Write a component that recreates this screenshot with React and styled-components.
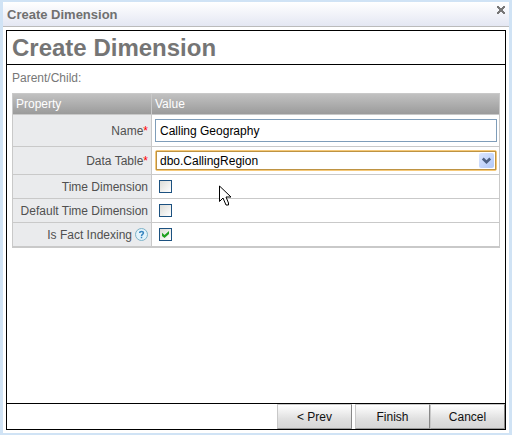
import React from "react";
import styled, { createGlobalStyle } from "styled-components";

const GlobalStyle = createGlobalStyle`
  *, *::before, *::after { box-sizing: border-box; }
  body {
    margin: 0;
    font-family: "Liberation Sans", Arial, sans-serif;
    font-size: 12px;
    color: #555;
  }
`;

const Dialog = styled.div`
  position: relative;
  display: flex;
  flex-direction: column;
  min-height: 100vh;
  border: solid #d0e3f5;
  border-width: 2px 3px;
  background: #fff;
`;

const TitleBar = styled.header`
  display: flex;
  justify-content: space-between;
  align-items: flex-start;
  height: 25px;
  padding-left: 4px;
  border-bottom: 1px solid #bbb;
  background: linear-gradient(#fff, #e4e7f3);
`;

const DialogTitle = styled.span`
  font-size: 13px;
  font-weight: bold;
  line-height: 25px;
  color: #707070;
`;

const CloseButton = styled.button`
  display: flex;
  margin: 0;
  padding: 4px;
  border: 0;
  background: none;
`;

const Panel = styled.main`
  flex: 1;
  display: flex;
  flex-direction: column;
  margin: 3px;
  border: 1px solid #000;
`;

const Heading = styled.h1`
  margin: 0;
  padding-left: 5px;
  border-bottom: 1px solid #000;
  font-size: 24px;
  line-height: 33px;
  color: #757575;
`;

const Content = styled.section`
  flex: 1;
  padding: 5px;
`;

const Subtitle = styled.p`
  margin: 0;
  padding-bottom: 7px;
  line-height: 16px;
  color: #777;
`;

const Properties = styled.table`
  width: 100%;
  border-collapse: separate;
  border-spacing: 0;
  border: 1px solid #c9c9c9;
`;

const HeaderRow = styled.tr`
  height: 21px;
  background: linear-gradient(#c1c1c1, #999);
`;

const HeaderCell = styled.th`
  padding: 0 3px;
  border-bottom: 1px solid #c9c9c9;
  font-weight: normal;
  text-align: left;
  color: #fff;
  &:first-child {
    width: 139px;
    border-right: 1px solid #c9c9c9;
  }
`;

const Row = styled.tr`
  height: ${(p) => p.$height}px;
`;

const LabelCell = styled.th`
  padding: 0 3px;
  border-right: 1px solid #c9c9c9;
  border-bottom: 1px solid #c9c9c9;
  background: #eaebed;
  font-weight: normal;
  text-align: right;
  white-space: nowrap;
  color: #505050;
`;

const LabelLine = styled.span`
  display: flex;
  justify-content: flex-end;
  align-items: center;
  gap: 3px;
`;

const Required = styled.span`
  color: #f00;
`;

const ValueCell = styled.td`
  padding: 0 2px 0 3px;
  border-bottom: 1px solid #c9c9c9;
`;

const TextInput = styled.input`
  display: block;
  width: 100%;
  height: 23px;
  margin: 0;
  padding: 0 4px;
  border: 1px solid #7f9db9;
  background: #fff;
  font: inherit;
  color: #000;
`;

const SelectWrap = styled.div`
  display: grid;
  align-items: center;
  height: 21px;
  border: 1px solid #f5c979;
  border-radius: 2px;
  & > * { grid-area: 1 / 1; }
`;

const Select = styled.select`
  appearance: none;
  width: 100%;
  height: 19px;
  margin: 0;
  padding: 0 20px 0 3px;
  border: 1px solid #be9343;
  outline: none;
  background: #fff;
  font: inherit;
  color: #000;
`;

const ArrowBox = styled.span`
  justify-self: end;
  display: flex;
  margin-right: 2px;
  border-radius: 2px;
  background: linear-gradient(135deg, #dce6ff, #b0c8f8);
  pointer-events: none;
`;

const CheckBox = styled.input`
  appearance: none;
  display: grid;
  place-content: center;
  width: 13px;
  height: 13px;
  margin: 0 4px;
  border: 1px solid #1c5180;
  background: linear-gradient(135deg, #dcdcd7, #fff);
  &:checked::after {
    content: "";
    width: 7px;
    height: 7px;
    background: #21a121;
    clip-path: polygon(0 26%, 36% 58%, 100% 0, 100% 43%, 36% 100%, 0 70%);
  }
`;

const Footer = styled.footer`
  display: flex;
  justify-content: flex-end;
  border-top: 1px solid #000;
`;

const ButtonGroup = styled.div`
  display: flex;
  margin-left: 3px;
`;

const Button = styled.button`
  width: 75px;
  height: 25px;
  padding: 0;
  border: 1px solid #999;
  border-color: #c8c8c8 #888 #999 #c8c8c8;
  background: linear-gradient(#fff, #e0e0e0 60%, #d6d6d6);
  font: inherit;
  color: #111;
`;

const Pointer = styled.svg`
  position: absolute;
  left: 216px;
  top: 183px;
  pointer-events: none;
`;

function CloseIcon() {
  return (
    <svg width="8" height="8" viewBox="0 0 8 8" shapeRendering="crispEdges" aria-hidden="true">
      <path fill="#777" d="M0 0h2v1h1v1h2V1h1V0h2v2H7v1H6v2h1v1h1v2H6V7H5V6H3v1H2v1H0V6h1V5h1V3H1V2H0z" />
    </svg>
  );
}

function ArrowIcon() {
  return (
    <svg width="15" height="15" viewBox="0 0 15 15" aria-hidden="true">
      <path fill="none" stroke="#4d6185" strokeWidth="2.6" d="m3.8 5.5 3.7 3.7 3.7-3.7" />
    </svg>
  );
}

function HelpIcon() {
  return (
    <svg width="13" height="13" viewBox="0 0 13 13" role="img" aria-label="Help">
      <circle cx="6.5" cy="6.5" r="6" fill="#e3f3fb" stroke="#7db2c8" />
      <path fill="none" stroke="#3a86c0" strokeWidth="1.5" d="M4.7 5.1c0-2.2 3.7-2.2 3.7 0 0 1.3-1.9 1.2-1.9 2.8M6.5 8.8v1.4" />
    </svg>
  );
}

function CheckRow({ id, label, checked, help }) {
  return (
    <Row $height={24}>
      <LabelCell scope="row">
        <LabelLine>
          <label htmlFor={id}>{label}</label>
          {help && <HelpIcon />}
        </LabelLine>
      </LabelCell>
      <ValueCell>
        <CheckBox id={id} type="checkbox" defaultChecked={checked} />
      </ValueCell>
    </Row>
  );
}

export default function App() {
  return (
    <>
      <GlobalStyle />
      <Dialog role="dialog" aria-label="Create Dimension">
        <TitleBar>
          <DialogTitle>Create Dimension</DialogTitle>
          <CloseButton type="button" aria-label="Close"><CloseIcon /></CloseButton>
        </TitleBar>
        <Panel>
          <Heading>Create Dimension</Heading>
          <Content>
            <Subtitle>Parent/Child:</Subtitle>
            <Properties>
              <thead>
                <HeaderRow>
                  <HeaderCell scope="col">Property</HeaderCell>
                  <HeaderCell scope="col">Value</HeaderCell>
                </HeaderRow>
              </thead>
              <tbody>
                <Row $height={32}>
                  <LabelCell scope="row">
                    <label htmlFor="name">Name<Required>*</Required></label>
                  </LabelCell>
                  <ValueCell><TextInput id="name" type="text" defaultValue="Calling Geography" /></ValueCell>
                </Row>
                <Row $height={28}>
                  <LabelCell scope="row">
                    <label htmlFor="data-table">Data Table<Required>*</Required></label>
                  </LabelCell>
                  <ValueCell>
                    <SelectWrap>
                      <Select id="data-table"><option>dbo.CallingRegion</option></Select>
                      <ArrowBox><ArrowIcon /></ArrowBox>
                    </SelectWrap>
                  </ValueCell>
                </Row>
                <CheckRow id="time" label="Time Dimension" />
                <CheckRow id="default-time" label="Default Time Dimension" />
                <CheckRow id="fact-indexing" label="Is Fact Indexing" checked help />
              </tbody>
            </Properties>
          </Content>
          <Footer>
            <Button type="button">&lt; Prev</Button>
            <ButtonGroup>
              <Button type="button">Finish</Button>
              <Button type="button">Cancel</Button>
            </ButtonGroup>
          </Footer>
        </Panel>
        <Pointer width="13" height="22" viewBox="0 0 13 22" aria-hidden="true">
          <path fill="#fff" stroke="#000" d="M.5 1v15.5L4 13l3 7h2.5v-2L7 12h5z" />
        </Pointer>
      </Dialog>
    </>
  );
}
